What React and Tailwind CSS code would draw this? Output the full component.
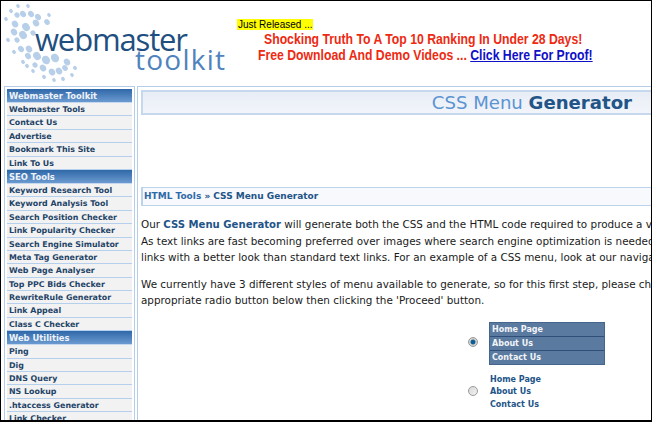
const groups = [
  ["Webmaster Toolkit", ["Webmaster Tools", "Contact Us", "Advertise", "Bookmark This Site", "Link To Us"]],
  ["SEO Tools", ["Keyword Research Tool", "Keyword Analysis Tool", "Search Position Checker", "Link Popularity Checker", "Search Engine Simulator", "Meta Tag Generator", "Web Page Analyser", "Top PPC Bids Checker", "RewriteRule Generator", "Link Appeal", "Class C Checker"]],
  ["Web Utilities", ["Ping", "Dig", "DNS Query", "NS Lookup", ".htaccess Generator", "Link Checker"]],
];
const dots = [
  [18,6,1.7],[28,6,1.7],[11,11,1.8],[17,15,2.4],[23,14,2.8],[31,14,2.8],[38,17,2.8],[49,15,1.7],[47,22,2.6],[36,23,3],
  [26,27,3.6],[15,24,3],[6,19,1.7],[14,32,3],[23,35,3.6],[33,33,2.4],[8,40,1.8],[17,40,2.4],[14,52,1.8],[21,49,2.8],[29,49,3],
  [23,62,1.8],[28,56,2.8],[37,56,3.6],[46,60,3.8],[55,58,3.8],[67,62,3],[27,66,1.8],[35,65,2.4],[43,68,3],[52,72,3],[59,71,3],[65,68,2.6],
  [75,68,1.8],[33,71,1.7],[44,77,1.8],[54,80,1.7],[63,79,1.8],[72,75,1.7],
];
function Logo() {
  return (
    <svg width="228" height="84" viewBox="0 0 228 84" className="block shrink-0">
      {dots.map((d, i) => (
        <ellipse key={i} cx={d[0] - 1} cy={d[1] - 1} rx={d[2]} ry={d[2] * 1.2} fill="#b7cfe9" transform={`rotate(-35 ${d[0] - 1} ${d[1] - 1})`} />
      ))}
      <text x="34" y="50" fontFamily="'Open Sans', sans-serif" fontWeight="500" fontSize="31" fill="#1f4f80" textLength="153">webmaster</text>
      <text x="134" y="69" fontFamily="'Open Sans', sans-serif" fontWeight="500" fontSize="28" fill="#4f83bd" textLength="90">toolkit</text>
    </svg>
  );
}
function Side() {
  return (
    <aside className="w-[131px] shrink-0 border border-[#b5cde8] bg-white px-[2px] pt-[2px] h-[336px] overflow-hidden">
      {groups.map(([h, items]) => (
        <div key={h}>
          <div className="h-[14px] leading-[15px] pl-[2px] text-[8.4px] font-bold text-[#eef3fa] bg-gradient-to-b from-[#2f68a8] to-[#6b9ad0] border-b border-[#c5d8ee]">{h}</div>
          {items.map(t => (
            <div key={t} className="h-[13.4px] leading-[14px] pl-[2px] text-[7.9px] font-bold text-[#1f4468] bg-[#f2f2f2] border-b border-[#b5d0ec] whitespace-nowrap">{t}</div>
          ))}
        </div>
      ))}
    </aside>
  );
}
function Radio({ on }) {
  return (
    <span className={"block size-[10px] mb-[2px] rounded-full border border-[#9a9a9a] " + (on ? "bg-[radial-gradient(circle,#0c5f95_0,#0c5f95_35%,#c8c8c8_50%,#e8e8e8_100%)]" : "bg-gradient-to-br from-[#d8d8d8] to-[#f2f2f2]")} />
  );
}
export default function App() {
  return (
    <div className="w-[652px] h-[422px] overflow-hidden bg-white border border-b-2 border-black" style={{ fontFamily: "'DejaVu Sans', sans-serif" }}>
      <header className="h-[84px] flex">
        <Logo />
        <div className="pl-[8px] pt-[18px] text-[#ee2a12] font-bold whitespace-nowrap" style={{ fontFamily: "'Liberation Sans', sans-serif" }}>
          <div className="h-[11px] leading-[11px] text-[10px] font-normal text-black"><span className="bg-[#ffff00] inline-block px-[1px]">Just Released ...</span></div>
          <div className="text-[15px] leading-[16px] mt-[1px] ml-[27px] scale-x-[0.816] origin-left w-[400px]">Shocking Truth To A Top 10 Ranking In Under 28 Days!</div>
          <div className="text-[15px] leading-[16px] ml-[21px] scale-x-[0.816] origin-left w-[420px]">Free Download And Demo Videos ... <span className="text-[#1010c8] underline">Click Here For Proof!</span></div>
        </div>
      </header>
      <div className="flex pl-[3px] pt-[1px] gap-[2px]">
        <Side />
        <main className="flex-1 min-w-0 border-l border-t border-[#b5cde8] pl-[3px] pt-[3px] h-[336px] overflow-hidden whitespace-nowrap text-[10.4px]">
          <div className="h-[25px] border-2 border-[#c5d8ee] border-r-0 bg-gradient-to-b from-[#e8edf6] to-[#f2f5fa] flex justify-end items-center pr-[19px] text-[18.1px] text-[#5a94d2]">
            <span>CSS Menu&nbsp;<b className="text-[#235488]">Generator</b></span>
          </div>
          <div className="mt-[72px] h-[19px] border border-[#bcd3ec] border-l-2 border-r-0 bg-[#f7f9fc] pl-[1px] leading-[17px] font-bold text-[9px] text-[#235488]">
            <span className="text-[#2f6aa8]">HTML Tools</span> » CSS Menu Generator
          </div>
          <div className="mt-[10px] leading-[16.5px] text-[#1a1a1a]">Our <b className="text-[#235488] text-[10.1px] leading-[10px]">CSS Menu Generator</b> will generate both the CSS and the HTML code required to produce a very<br />As text links are fast becoming preferred over images where search engine optimization is needed<br />links with a better look than standard text links. For an example of a CSS menu, look at our navigation</div>
          <div className="mt-[10px] leading-[16.5px] text-[#1a1a1a]">We currently have 3 different styles of menu available to generate, so for this first step, please choose<br />appropriate radio button below then clicking the 'Proceed' button.</div>
          <div className="mt-[13px] flex items-center pl-[327px] gap-[11px]">
            <Radio on />
            <div className="w-[116px] bg-[#5a7aa0] text-[8px] font-bold text-[#f2f4f8] border border-[#46658c] leading-[13px]">
              <div className="h-[14px] pl-[2px] border-b border-[#2f4f78]">Home Page</div>
              <div className="h-[14px] pl-[2px] border-b border-[#2f4f78]">About Us</div>
              <div className="h-[13px] pl-[2px]">Contact Us</div>
            </div>
          </div>
          <div className="mt-[9px] flex items-center pl-[327px] gap-[12px]">
            <Radio />
            <div className="text-[8px] font-bold text-[#235488] leading-[12.6px]">
              <div>Home Page</div><div>About Us</div><div>Contact Us</div>
            </div>
          </div>
        </main>
      </div>
    </div>
  );
}
